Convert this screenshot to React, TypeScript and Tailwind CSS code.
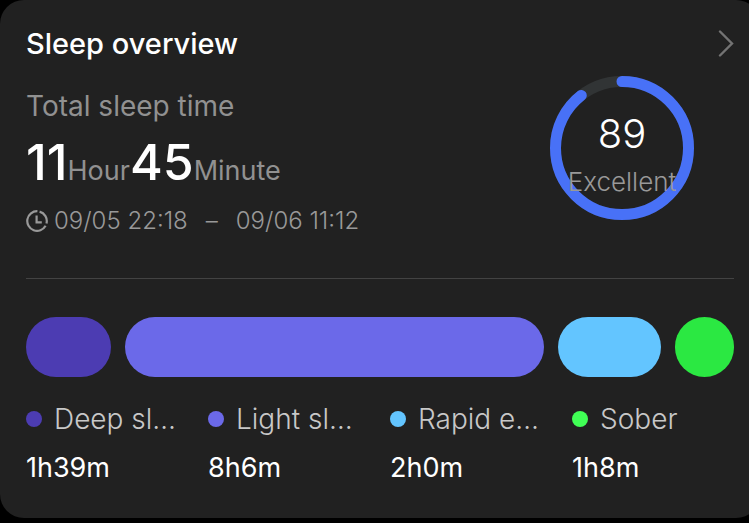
type Stage = {
  name: string;
  time: string;
  minutes: number;
  bar: string;
  dot: string;
};

const stages: Stage[] = [
  { name: "Deep sl…", time: "1h39m", minutes: 99, bar: "bg-[#4c3cb2]", dot: "bg-[#4c3cb2]" },
  { name: "Light sl…", time: "8h6m", minutes: 486, bar: "bg-[#6b69e9]", dot: "bg-[#6b69e9]" },
  { name: "Rapid e…", time: "2h0m", minutes: 120, bar: "bg-[#63c5ff]", dot: "bg-[#63c5ff]" },
  { name: "Sober", time: "1h8m", minutes: 68, bar: "bg-[#2be842]", dot: "bg-[#40ff55]" },
];

function ClockIcon() {
  return (
    <svg
      className="size-[22px] shrink-0"
      viewBox="0 0 22 22"
      fill="none"
      stroke="currentColor"
      strokeWidth="2.2"
      aria-hidden="true"
    >
      <path d="M11.4 1.2A9.8 9.8 0 1 0 19.6 15.8" />
      <path d="M13.6 1.6A9.8 9.8 0 0 1 20.5 13.4" />
      <path d="M10.6 5.6V12.3H15.8" />
    </svg>
  );
}

function ScoreRing({ score, label }: { score: number; label: string }) {
  return (
    <div className="relative size-36 shrink-0">
      <svg className="size-full -rotate-90" viewBox="0 0 144 144" fill="none" aria-hidden="true">
        <circle cx="72" cy="72" r="66.5" stroke="#313435" strokeWidth="11" />
        <circle
          cx="72"
          cy="72"
          r="66.5"
          stroke="#4871f7"
          strokeWidth="11"
          strokeLinecap="round"
          pathLength={100}
          strokeDasharray={`${score + 0.5} 100`}
        />
      </svg>
      <div className="absolute inset-0 flex flex-col items-center pt-9">
        <span className="text-[40px] leading-[44px] font-light text-white">{score}</span>
        <span className="mt-2 text-[26px] leading-9 font-light text-[#999999]">{label}</span>
      </div>
    </div>
  );
}

export default function App() {
  return (
    <div className="min-h-screen overflow-hidden bg-black font-['Inter','Liberation_Sans',sans-serif]">
      <section className="-mr-[11px] rounded-3xl bg-[#212121] px-[26px] pt-6 pb-8">
        <header className="flex items-center justify-between">
          <h1 className="text-[29px] leading-10 font-medium text-white">Sleep overview</h1>
          <button type="button" aria-label="Open sleep details" className="text-[#737373]">
            <svg className="h-7 w-4" viewBox="0 0 16 28" fill="none" stroke="currentColor" strokeWidth="2.4" strokeLinecap="round">
              <path d="M2 1.5L14 13.5L2 25.5" />
            </svg>
          </button>
        </header>

        <div className="flex items-start justify-between pt-3 pr-10">
          <div className="pt-3 text-[#919191]">
            <h2 className="text-[28px] leading-9 font-normal">Total sleep time</h2>
            <p className="flex items-baseline pt-2 text-[27px] leading-[60px] font-normal">
              <span className="text-[50px] font-medium text-white">11</span>
              Hour
              <span className="text-[50px] font-medium text-white">45</span>
              Minute
            </p>
            <p className="flex items-center gap-1.5 pt-1 text-[24px] leading-8 font-light text-[#999999]">
              <ClockIcon />
              <span>09/05 22:18</span>
              <span className="px-3">–</span>
              <span>09/06 11:12</span>
            </p>
          </div>
          <ScoreRing score={89} label="Excellent" />
        </div>

        <hr className="mt-[41px] border-[#434343]" />

        <div className="mt-[38px] flex h-15 gap-3.5">
          {stages.map((stage) => (
            <div
              key={stage.name}
              className={`basis-0 rounded-[30px] ${stage.bar}`}
              style={{ flexGrow: stage.minutes }}
            />
          ))}
        </div>

        <dl className="-mr-5 grid grid-cols-4 pt-6">
          {stages.map((stage) => (
            <div key={stage.name}>
              <dt className="flex items-center gap-3">
                <span className={`size-4 shrink-0 rounded-full ${stage.dot}`} />
                <span className="text-[28px] leading-9 font-light whitespace-nowrap text-[#c8c8c8]">
                  {stage.name}
                </span>
              </dt>
              <dd className="pt-[13px] text-[27px] leading-9 text-white">{stage.time}</dd>
            </div>
          ))}
        </dl>
      </section>
    </div>
  );
}
